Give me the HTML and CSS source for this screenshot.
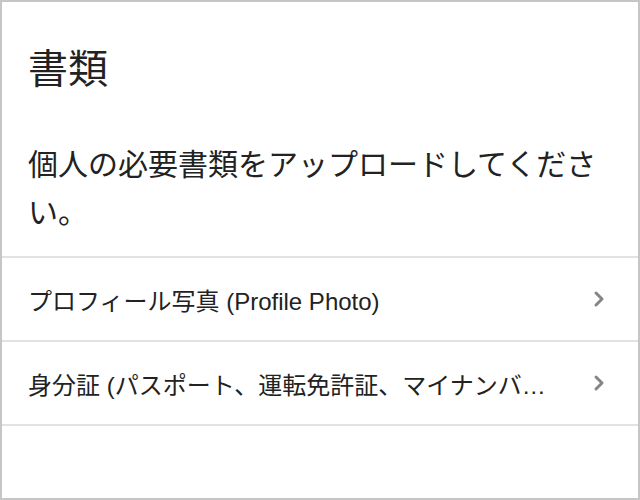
FILE: index.html
```html
<!DOCTYPE html>
<html lang="ja">
<head>
    <meta charset="UTF-8">
    <meta name="viewport" content="width=device-width, initial-scale=1.0">
    <title>書類</title>
    <link rel="stylesheet" href="styles.css">
</head>
<body>
    <div class="panel">
        <div class="intro">
            <h1>書類</h1>
            <p>個人の必要書類をアップロードしてください。</p>
        </div>
        <ul class="doc-list">
            <li class="doc-item">
                <span class="doc-name">プロフィール写真 (Profile Photo)</span>
                <svg class="chevron" width="12" height="18" viewBox="0 0 12 18">
                    <path d="M3 3 L9 9 L3 15" fill="none" stroke="#858585" stroke-width="3" stroke-linecap="round" stroke-linejoin="round"/>
                </svg>
            </li>
            <li class="doc-item">
                <span class="doc-name">身分証 (パスポート、運転免許証、マイナンバーカードなど)</span>
                <svg class="chevron" width="12" height="18" viewBox="0 0 12 18">
                    <path d="M3 3 L9 9 L3 15" fill="none" stroke="#858585" stroke-width="3" stroke-linecap="round" stroke-linejoin="round"/>
                </svg>
            </li>
        </ul>
    </div>
</body>
</html>
```

FILE: styles.css
```css
* {
    box-sizing: border-box;
}

body {
    margin: 0;
    background: #ffffff;
    font-family: "Liberation Sans", "Noto Sans CJK JP", sans-serif;
    color: #222222;
}

.panel {
    width: 640px;
    height: 500px;
    border: 2px solid #c6c6c6;
    background: #ffffff;
}

.intro {
    padding: 43px 26px 19px 26px;
}

h1 {
    margin: 0;
    font-size: 40px;
    font-weight: normal;
    line-height: 1.2;
}

.intro p {
    margin: 48px 0 0 0;
    font-size: 30px;
    line-height: 48px;
}

.doc-list {
    list-style: none;
    margin: 0;
    padding: 0;
    border-top: 2px solid #e2e2e2;
}

.doc-item {
    display: flex;
    align-items: center;
    height: 84px;
    padding: 0 33px 0 26px;
    border-bottom: 2px solid #e2e2e2;
    font-size: 24px;
}

.doc-name {
    flex: 1;
    min-width: 0;
    margin-right: 38px;
    white-space: nowrap;
    overflow: hidden;
    text-overflow: ellipsis;
}

.chevron {
    flex: none;
}
```
